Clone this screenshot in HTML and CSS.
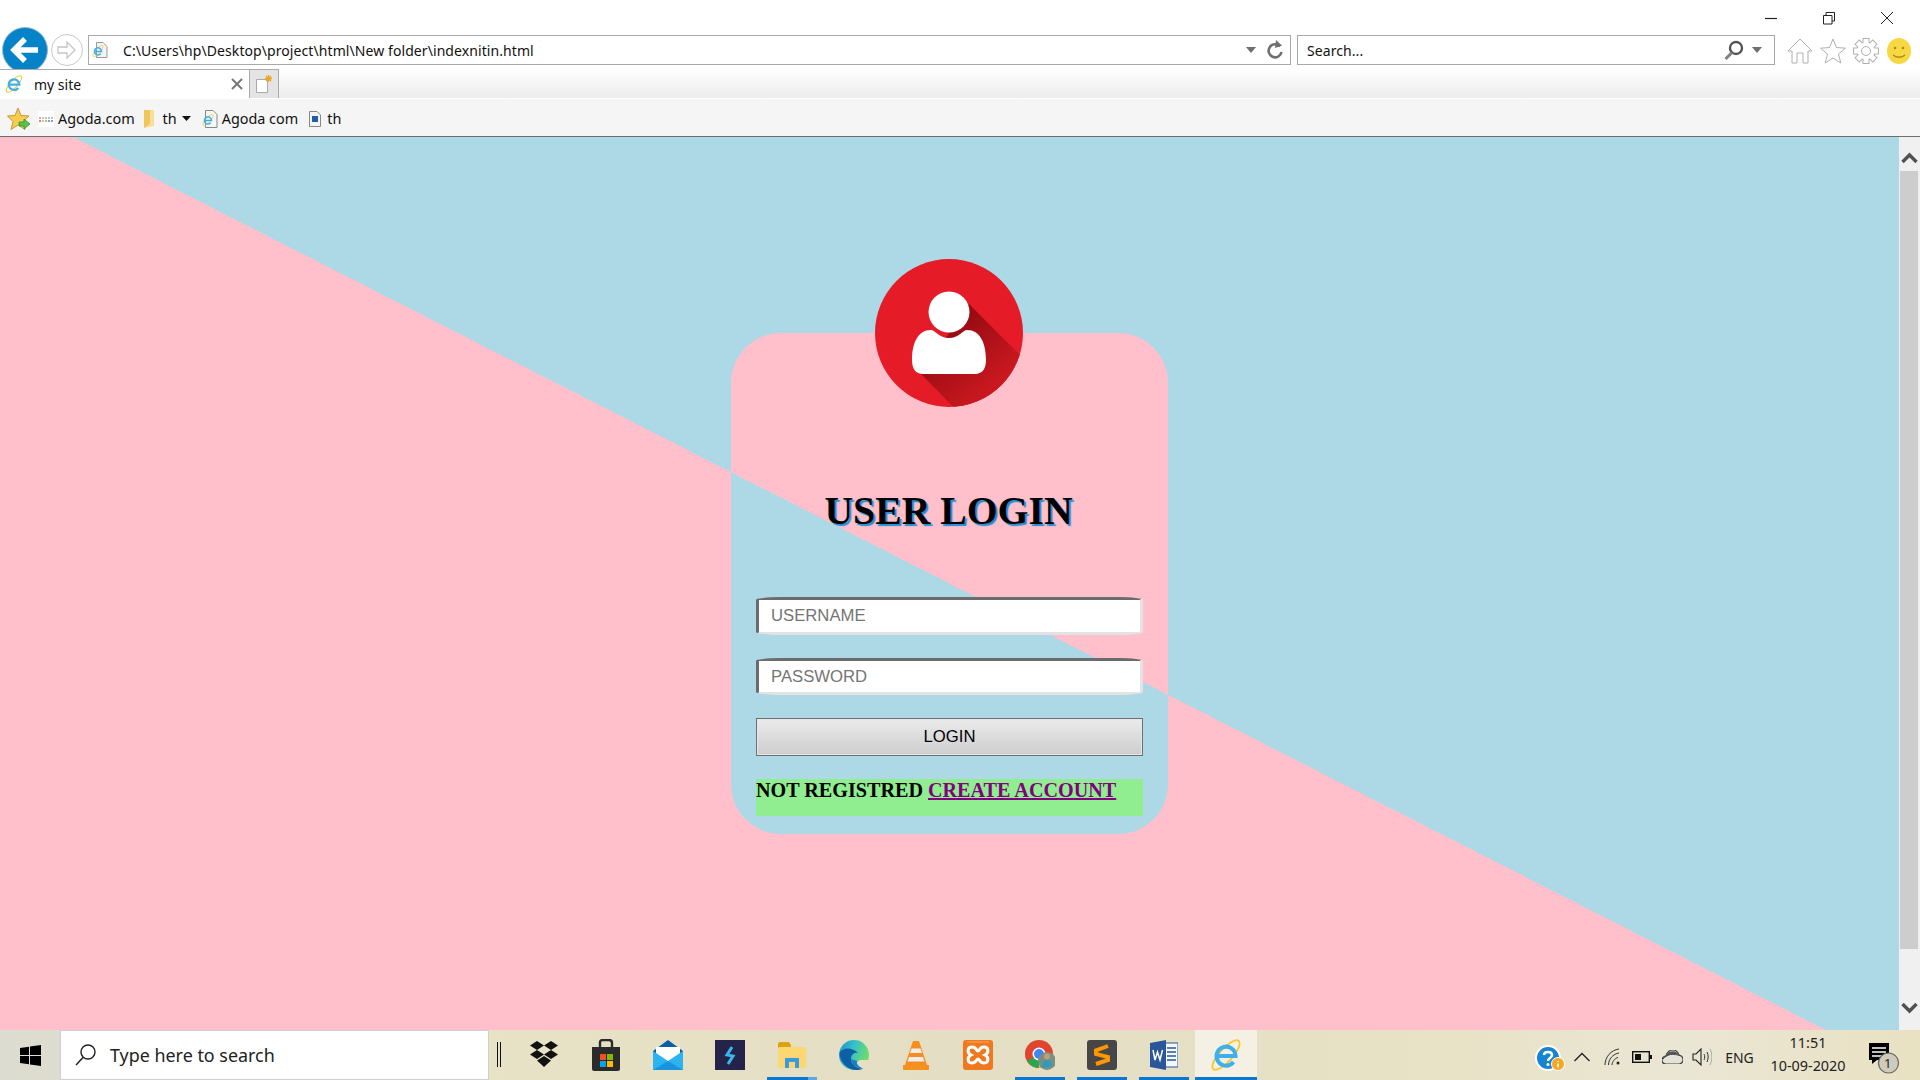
FILE: index.html
```html
<!DOCTYPE html>
<html lang="en">
<head>
    <meta charset="UTF-8">
    <meta name="viewport" content="width=device-width, initial-scale=1.0">
    <title>my site</title>
    <link rel="stylesheet" href="styles.css">
</head>
<body>

    <svg class="defs" width="0" height="0">
        <defs>
            <symbol id="ie" viewBox="0 0 32 32">
                <ellipse cx="16" cy="16" rx="19" ry="6.500" transform="rotate(-48 16 16)" fill="none" stroke="#f5c92a" stroke-width="1.800"/>
                <path d="M7 17H25.500A9.500 9.500 0 1 0 23.500 23" fill="none" stroke="#3fb0ec" stroke-width="4"/>
            </symbol>
            <g id="gear-shape">
                <circle cx="13" cy="13" r="8.500"/>
                <rect x="10.500" y="1" width="5" height="5"/>
                <rect x="10.500" y="1" width="5" height="5" transform="rotate(45 13 13)"/>
                <rect x="10.500" y="1" width="5" height="5" transform="rotate(90 13 13)"/>
                <rect x="10.500" y="1" width="5" height="5" transform="rotate(135 13 13)"/>
                <rect x="10.500" y="1" width="5" height="5" transform="rotate(180 13 13)"/>
                <rect x="10.500" y="1" width="5" height="5" transform="rotate(225 13 13)"/>
                <rect x="10.500" y="1" width="5" height="5" transform="rotate(270 13 13)"/>
                <rect x="10.500" y="1" width="5" height="5" transform="rotate(315 13 13)"/>
            </g>
        </defs>
    </svg>

    <!-- window controls -->
    <div class="titlebar">
        <svg class="winbtn" width="14" height="14" viewBox="0 0 14 14"><path d="M1 7.500H13" stroke="#222" stroke-width="1.200"/></svg>
        <svg class="winbtn" width="14" height="14" viewBox="0 0 14 14"><path d="M1.500 4.500H10V13H1.500ZM4 4.500V1.500H12.500V10H10" fill="none" stroke="#222"/></svg>
        <svg class="winbtn" width="14" height="14" viewBox="0 0 14 14"><path d="M1 1L13 13M13 1L1 13" stroke="#222"/></svg>
    </div>

    <!-- address row -->
    <div class="toolbar">
        <svg class="nav-back" width="46" height="46" viewBox="0 0 46 46">
            <circle cx="23" cy="23" r="22.500" fill="#0483c8" stroke="#9cb6c6"/>
            <path d="M36 23H13M23 12L12 23L23 34" fill="none" stroke="#fff" stroke-width="5.500"/>
        </svg>
        <svg class="nav-forward" width="32" height="32" viewBox="0 0 32 32">
            <circle cx="16" cy="16" r="15.500" fill="#fff" stroke="#c9c9c9"/>
            <path d="M7 13H16V8L24 16L16 24V19H7Z" fill="none" stroke="#c4c4c4" stroke-width="1.300"/>
        </svg>
        <div class="address">
            <svg class="addr-icon" width="16" height="16" viewBox="0 0 16 16">
                <path d="M4.500 .500H11L15 4.500V15.500H4.500Z" fill="#f4f4f4" stroke="#999"/>
                <use href="#ie" x="0" y="3" width="12" height="12"/>
            </svg>
            <span class="addr-text">C:\Users\hp\Desktop\project\html\New folder\indexnitin.html</span>
            <svg class="caret" width="10" height="6" viewBox="0 0 10 6"><path d="M0 0H10L5 6Z" fill="#6e6e6e"/></svg>
            <svg class="refresh" width="18" height="20" viewBox="0 0 18 20">
                <path d="M14 6.500A6.500 6.500 0 1 0 15.500 12" fill="none" stroke="#6f6f6f" stroke-width="2.600"/>
                <path d="M10 0L16 5.500L9 8Z" fill="#6f6f6f"/>
            </svg>
        </div>
        <div class="searchbox">
            <span class="addr-text">Search...</span>
            <svg class="magnify" width="20" height="20" viewBox="0 0 20 20">
                <circle cx="12" cy="8" r="6" fill="none" stroke="#555" stroke-width="2.400"/>
                <path d="M8 12.500L1.500 19" stroke="#808080" stroke-width="3"/>
            </svg>
            <svg class="caret" width="10" height="6" viewBox="0 0 10 6"><path d="M0 0H10L5 6Z" fill="#6e6e6e"/></svg>
        </div>
        <div class="tools">
            <svg width="26" height="26" viewBox="0 0 26 26"><path d="M13 1L1 13H5V25H10V15H16V25H21V13H25Z" fill="#fff" stroke="#b0b0b0"/></svg>
            <svg width="26" height="26" viewBox="0 0 26 26"><path d="M13 1L16.500 9.500L25.500 10.200L18.500 16L20.800 25L13 20L5.200 25L7.500 16L.500 10.200L9.500 9.500Z" fill="#fff" stroke="#b0b0b0"/></svg>
            <svg width="26" height="26" viewBox="0 0 26 26">
                <use href="#gear-shape" fill="#fff" stroke="#b0b0b0" stroke-width="2"/>
                <use href="#gear-shape" fill="#fff" stroke="none"/>
                <circle cx="13" cy="13" r="4.500" fill="none" stroke="#b0b0b0"/>
            </svg>
            <svg width="26" height="26" viewBox="0 0 26 26">
                <ellipse cx="13" cy="13" rx="12" ry="13" fill="#f7d842"/>
                <circle cx="9" cy="10" r="1.300" fill="#a58a20"/>
                <circle cx="17" cy="10" r="1.300" fill="#a58a20"/>
                <path d="M7 17C10 20 16 20 19 17" fill="none" stroke="#a58a20" stroke-width="1.300"/>
            </svg>
        </div>
    </div>

    <!-- tabs -->
    <div class="tabrow">
        <div class="tab">
            <svg width="18" height="18"><use href="#ie"/></svg>
            <span class="tab-title">my site</span>
            <svg class="tab-close" width="12" height="12" viewBox="0 0 12 12"><path d="M1 1L11 11M11 1L1 11" stroke="#777" stroke-width="2"/></svg>
        </div>
        <div class="newtab">
            <svg width="18" height="18" viewBox="0 0 18 18">
                <path d="M1.500 4.500H12.500V17.500H1.500Z" fill="#fff" stroke="#aaa"/>
                <path d="M13.500 0V7M10 3.500H17M11 1L16 6M16 1L11 6" stroke="#f0a41c" stroke-width="1.300"/>
            </svg>
        </div>
    </div>

    <!-- favorites -->
    <div class="favbar">
        <svg class="fav-star" width="24" height="24" viewBox="0 0 24 24">
            <path d="M11 1L14 8.500L22 9L16 14.500L18 22.500L11 18L4 22.500L6 14.500L.500 9L8 8.500Z" fill="#f8cc4c" stroke="#c8963a"/>
            <path d="M12 15H17V12L23 17L17 22V19H12Z" fill="#54c548" stroke="#2f8a2c" stroke-width=".700"/>
        </svg>
        <svg class="fav-icon" width="16" height="16" viewBox="0 0 16 16">
            <rect width="16" height="16" fill="#fff"/>
            <path d="M1 7H3" stroke="#999" stroke-width="1.500"/><path d="M4 7H6" stroke="#bbb" stroke-width="1.500"/>
            <path d="M7 7H9M10 7H12M13 7H15" stroke="#aaa" stroke-width="1.500"/>
            <path d="M1 10H3" stroke="#e2504c" stroke-width="1.500"/><path d="M4 10H6" stroke="#f0a93c" stroke-width="1.500"/>
            <path d="M7 10H9" stroke="#7bbf4a" stroke-width="1.500"/><path d="M10 10H12" stroke="#4a8fd8" stroke-width="1.500"/>
            <path d="M13 10H15" stroke="#9a5ac8" stroke-width="1.500"/>
        </svg>
        <span class="fav-link">Agoda.com</span>
        <svg class="fav-folder" width="11" height="18" viewBox="0 0 11 18"><path d="M0 0H10V16L0 18Z" fill="#f7df9a"/><path d="M0 0H6V14L0 18Z" fill="#efc65c"/></svg>
        <span class="fav-link">th</span>
        <svg class="fav-caret" width="9" height="5" viewBox="0 0 9 5"><path d="M0 0H9L4.500 5Z" fill="#111"/></svg>
        <svg class="fav-page" width="16" height="18" viewBox="0 0 16 18">
            <path d="M3.500 .500H11L15 4.500V17.500H3.500Z" fill="#f6f6f6" stroke="#888"/>
            <use href="#ie" x="0" y="4" width="12" height="12"/>
        </svg>
        <span class="fav-link">Agoda com</span>
        <svg class="fav-doc" width="12" height="16" viewBox="0 0 12 16">
            <path d="M.500 .500H8L11.500 4V15.500H.500Z" fill="#f4f4f4" stroke="#888"/>
            <rect x="3" y="5" width="6" height="6" fill="#1f5fa8"/>
        </svg>
        <span class="fav-link">th</span>
    </div>

    <div class="viewport">
        <main class="page">
            <form class="login-card">
                <svg class="avatar" width="148" height="148" viewBox="0 0 148 148">
                    <defs>
                        <clipPath id="avatar-clip"><circle cx="74" cy="74" r="74"/></clipPath>
                        <linearGradient id="avatar-shade" gradientUnits="userSpaceOnUse" x1="70" y1="70" x2="120" y2="125">
                            <stop offset="0" stop-color="#950a12"/>
                            <stop offset="1" stop-color="#c9181f"/>
                        </linearGradient>
                    </defs>
                    <circle cx="74" cy="74" r="74" fill="#e51c28"/>
                    <path clip-path="url(#avatar-clip)" d="M94 45L150 101V160H90L46 115Z" fill="url(#avatar-shade)"/>
                    <circle cx="74" cy="53" r="20.500" fill="#fff"/>
                    <path d="M37 101C37 84 43 71 56 71C60 71 64 79 74 79C84 79 88 71 92 71C105 71 111 84 111 101C111 110 107 115 100 115H48C41 115 37 110 37 101Z" fill="#fff"/>
                </svg>
                <h1 class="login-title">USER LOGIN</h1>
                <input class="field" type="text" placeholder="USERNAME">
                <input class="field field-pass" type="password" placeholder="PASSWORD">
                <button class="login-btn" type="button">LOGIN</button>
                <p class="register">NOT REGISTRED <a href="#">CREATE ACCOUNT</a></p>
            </form>
        </main>
        <div class="scrollbar">
            <svg width="17" height="12" viewBox="0 0 17 12"><path d="M1.500 10L8.500 3L15.500 10" fill="none" stroke="#505050" stroke-width="3.400"/></svg>
            <div class="scroll-track"><div class="scroll-thumb"></div></div>
            <svg width="17" height="12" viewBox="0 0 17 12"><path d="M1.500 2L8.500 9L15.500 2" fill="none" stroke="#505050" stroke-width="3.400"/></svg>
        </div>
    </div>

    <!-- windows taskbar -->
    <div class="taskbar">
        <div class="start">
            <svg width="21" height="21" viewBox="0 0 21 21"><path d="M0 3L9 1.700V10H0ZM10 1.500L21 0V10H10ZM0 11H9V19.300L0 18ZM10 11H21V21L10 19.500Z" fill="#000"/></svg>
        </div>
        <div class="task-search">
            <svg width="21" height="22" viewBox="0 0 21 22">
                <circle cx="13" cy="8" r="7" fill="none" stroke="#222" stroke-width="1.400"/>
                <path d="M8 13.500L1 21" stroke="#222" stroke-width="1.500"/>
            </svg>
            <span>Type here to search</span>
        </div>
        <div class="task-divider"></div>

        <div class="slot">
            <svg width="30" height="27" viewBox="0 0 30 27"><path d="M8 0L15 4.500L8 9L1 4.500ZM22 0L29 4.500L22 9L15 4.500ZM8 9L15 13.500L8 18L1 13.500ZM22 9L29 13.500L22 18L15 13.500ZM15 15L22 19.500L15 26L8 19.500Z" fill="#111"/></svg>
        </div>
        <div class="slot">
            <svg width="30" height="32" viewBox="0 0 30 32">
                <path d="M9 8V4C9 2 10 1 12 1H18C20 1 21 2 21 4V8" fill="none" stroke="#2b2b2b" stroke-width="2.400"/>
                <path d="M1 8H29V30C29 31 28 32 27 32H3C2 32 1 31 1 30Z" fill="#2b2b2b"/>
                <rect x="9" y="15" width="6" height="6" fill="#f25022"/>
                <rect x="16" y="15" width="6" height="6" fill="#7fba00"/>
                <rect x="9" y="22" width="6" height="6" fill="#00a4ef"/>
                <rect x="16" y="22" width="6" height="6" fill="#ffb900"/>
            </svg>
        </div>
        <div class="slot">
            <svg width="30" height="30" viewBox="0 0 30 30">
                <path d="M0 11L15 0L30 11V30H0Z" fill="#0a5fa8"/>
                <path d="M3 7H27V15L15 22L3 15Z" fill="#fff"/>
                <path d="M0 11L15 21L30 11V30H0Z" fill="#2bb4ef"/>
                <path d="M0 30L15 21L30 30Z" fill="#1a94dc"/>
            </svg>
        </div>
        <div class="slot">
            <svg width="30" height="30" viewBox="0 0 30 30">
                <rect width="30" height="30" fill="#24244a"/>
                <path d="M17 7L12 15L18 16L13 24" fill="none" stroke="#3db5e8" stroke-width="3"/>
            </svg>
        </div>
        <div class="slot slot-folder">
            <svg width="28" height="26" viewBox="0 0 28 26">
                <path d="M0 2C0 1 1 0 2 0H11L13 3V6H0Z" fill="#dca30f"/>
                <rect y="5" width="28" height="21" rx="2" fill="#fcd872"/>
                <path d="M7 26V16H21V26H17V20H11V26Z" fill="#3b9ae0"/>
            </svg>
        </div>
        <div class="slot">
            <svg width="30" height="30" viewBox="0 0 30 30">
                <defs><linearGradient id="edge-g" x1="0" y1="0" x2="1" y2=".4"><stop offset="0" stop-color="#1f8fd0"/><stop offset=".5" stop-color="#35c1c8"/><stop offset="1" stop-color="#6fdc6a"/></linearGradient></defs>
                <circle cx="15" cy="15" r="15" fill="url(#edge-g)"/>
                <path d="M21 20H30.200C29.500 25 26 28.500 21 30C16 29 16 22 21 20Z" fill="#e5dfc4"/>
                <path d="M.500 13C1 23 9 30 17 30C20 30 22 29.500 24 28.500C17 29 12 24 12 19C12 15 15 12 19 13C14 7 3 7 .500 13Z" fill="#0f5fa6"/>
                <path d="M12 19C12 24 17 29 24 28.500C20 27 17 24 18 21C15 20 13 19 12 19Z" fill="#1a7fca"/>
            </svg>
        </div>
        <div class="slot">
            <svg width="26" height="30" viewBox="0 0 26 30">
                <path d="M10 1H16L24 25H2Z" fill="#f78d1e"/>
                <path d="M8.500 8.500H17.500L19 13H7ZM6 17H20L21.500 21.500H4.500Z" fill="#eeeeee"/>
                <path d="M0 25H26V29C26 29.500 25.500 30 25 30H1C.500 30 0 29.500 0 29Z" fill="#f5911e"/>
            </svg>
        </div>
        <div class="slot">
            <svg width="30" height="30" viewBox="0 0 30 30">
                <rect width="30" height="30" rx="3" fill="#f0781e"/>
                <path d="M4 2H26" stroke="#f9a868" stroke-width="1"/>
                <path d="M9 7C14 7 13 11 15 11C17 11 16 7 21 7C26 7 26 13 22 15C26 17 26 23 21 23C16 23 17 19 15 19C13 19 14 23 9 23C4 23 4 17 8 15C4 13 4 7 9 7Z" fill="none" stroke="#fff" stroke-width="3"/>
            </svg>
        </div>
        <div class="slot slot-open">
            <svg width="30" height="30" viewBox="0 0 30 30">
                <circle cx="14" cy="14" r="14" fill="#e0452f"/>
                <path d="M14 14L2 21A14 14 0 0 0 14 28Z" fill="#2da44e"/>
                <path d="M14 14H28A14 14 0 0 1 14 28Z" fill="#f7c325"/>
                <circle cx="14" cy="14" r="6.500" fill="#fff"/>
                <circle cx="14" cy="14" r="5" fill="#4285f4"/>
                <circle cx="22" cy="21" r="9" fill="#77907f"/>
                <circle cx="22" cy="16.500" r="3" fill="#c79a7a"/>
                <path d="M17 28C17 22 20 20 22 20C25 20 27 22 27 26Z" fill="#2d9bc0"/>
            </svg>
        </div>
        <div class="slot slot-open">
            <svg width="30" height="30" viewBox="0 0 30 30">
                <rect width="30" height="30" rx="3" fill="#464646"/>
                <path d="M21 6L9 10.500V14L21 17V20L9 24" fill="none" stroke="#ff9800" stroke-width="4"/>
            </svg>
        </div>
        <div class="slot slot-open">
            <svg width="28" height="30" viewBox="0 0 28 30">
                <rect x="10" y="3" width="18" height="24" fill="#f3f6fb" stroke="#2b579a"/>
                <path d="M17 8H26M17 12H26M17 16H26M17 20H26" stroke="#2b579a" stroke-width="1.500"/>
                <path d="M0 3L16 0V30L0 27Z" fill="#2b579a"/>
                <path d="M3 10L5 20L7.500 12L10 20L12.500 10" fill="none" stroke="#fff" stroke-width="1.500"/>
            </svg>
        </div>
        <div class="slot slot-active">
            <svg width="32" height="32"><use href="#ie"/></svg>
        </div>

        <div class="tray">
            <div class="tray-help">
                <svg width="30" height="26" viewBox="0 0 30 26">
                    <circle cx="13" cy="13" r="12" fill="#1684d0" stroke="#fff" stroke-width="2"/>
                    <path d="M9 10C9 6 17 6 17 10C17 13 13 13 13 16" fill="none" stroke="#fff" stroke-width="2.500"/>
                    <circle cx="13" cy="19.500" r="1.500" fill="#fff"/>
                    <circle cx="23" cy="19" r="6.500" fill="#f5a623" stroke="#fff"/>
                    <path d="M23 16V17M23 18.500V22.500" stroke="#fff" stroke-width="1.500"/>
                </svg>
            </div>
            <div class="tray-item"><svg width="16" height="10" viewBox="0 0 16 10"><path d="M.500 9L8 1.500L15.500 9" fill="none" stroke="#222" stroke-width="1.300"/></svg></div>
            <div class="tray-item">
                <svg width="17" height="18" viewBox="0 0 17 18">
                    <path d="M1 17C1 9 7 2 15 1M4.500 17C4.500 11 9 6 15 5M8 17C8 14 11 10 14 9.500" fill="none" stroke="#333" stroke-width="1"/>
                    <circle cx="14" cy="15" r="1.500" fill="#222"/>
                </svg>
            </div>
            <div class="tray-item">
                <svg width="20" height="12" viewBox="0 0 20 12">
                    <rect x=".700" y=".700" width="16.600" height="10.600" fill="none" stroke="#111" stroke-width="1.400"/>
                    <rect x="3" y="3" width="6" height="6" fill="#111"/>
                    <rect x="18" y="4" width="2" height="4" fill="#111"/>
                </svg>
            </div>
            <div class="tray-item">
                <svg width="21" height="14" viewBox="0 0 21 14">
                    <path d="M4 14C1 14 0 12 0 10C0 8 2 6 4 6C5 2 8 0 11 0C14 0 16 2 17 5C19 5 21 7 21 10C21 12 19 14 17 14Z" fill="#e4e1d6" stroke="#444" stroke-width="1.200"/>
                    <path d="M1 9C5 4 11 3 19 6" fill="none" stroke="#444" stroke-width="1"/>
                    <path d="M4 5C6 1 14 -1 17 5C12 3 8 4 2 8Z" fill="#555"/>
                </svg>
            </div>
            <div class="tray-item">
                <svg width="20" height="18" viewBox="0 0 20 18">
                    <path d="M1 6H4L9 1V17L4 12H1Z" fill="none" stroke="#222" stroke-width="1.100"/>
                    <path d="M12 6C13 8 13 10 12 12M15 4C16.500 7 16.500 11 15 14" fill="none" stroke="#333"/>
                    <path d="M18 1C20.500 6 20.500 12 18 17" fill="none" stroke="#aaa"/>
                </svg>
            </div>
            <div class="tray-lang">ENG</div>
            <div class="tray-clock">
                <span>11:51</span>
                <span>10-09-2020</span>
            </div>
            <div class="tray-notify">
                <svg width="32" height="32" viewBox="0 0 32 32">
                    <path d="M0 1H20V18H8L3 22V18H0Z" fill="#000"/>
                    <path d="M3 6H17M3 10H17M3 14H13" stroke="#fff" stroke-width="1.300"/>
                    <circle cx="19.500" cy="21" r="10" fill="#cfcbbb" stroke="#666" stroke-width="1.200"/>
                </svg>
                <span class="notify-count">1</span>
            </div>
        </div>
    </div>

</body>
</html>
```

FILE: styles.css
```css
* {
    box-sizing: border-box;
}
html, body {
    height: 100%;
}
body {
    margin: 0;
    display: flex;
    flex-direction: column;
    overflow: hidden;
    font-family: "Noto Sans", "Open Sans", sans-serif;
    font-size: 14px;
    color: #111;
    background-color: #fff;
}
svg {
    display: block;
    flex: none;
}
.defs {
    position: absolute;
}

/* browser chrome */
.titlebar {
    height: 35px;
    display: flex;
    justify-content: flex-end;
    align-items: center;
    gap: 44px;
    padding: 0 26px 0 0;
}
.toolbar {
    height: 34px;
    display: flex;
    align-items: flex-start;
}
.nav-back {
    margin: -8px 3px -4px 2px;
}
.nav-forward {
    margin: -1px 5px 0 0;
}
.address, .searchbox {
    height: 30px;
    display: flex;
    align-items: center;
    border: 1px solid #a9a9a9;
    background-color: #fff;
}
.address {
    width: 1203px;
    padding: 0 6px 0 3px;
}
.addr-icon {
    margin-right: 15px;
}
.addr-text {
    flex: 1;
    font-size: 14px;
    letter-spacing: .08px;
}
.refresh {
    margin-left: 10px;
}
.searchbox {
    width: 478px;
    margin-left: 6px;
    padding: 0 12px 0 9px;
}
.magnify {
    margin-right: 8px;
}
.tools {
    display: flex;
    gap: 7px;
    margin: 3px 0 0 12px;
}
.tabrow {
    height: 29px;
    display: flex;
    background: linear-gradient(#fff, #ececec);
}
.tab {
    position: relative;
    width: 250px;
    display: flex;
    align-items: center;
    padding: 0 6px 0 5px;
    border: 1px solid #ababab;
    border-width: 1px 1px 0 0;
    background-color: #fff;
}
.tab-title {
    flex: 1;
    margin-left: 11px;
    font-size: 14px;
}
.newtab {
    width: 29px;
    display: flex;
    align-items: center;
    justify-content: center;
    border: 1px solid #ababab;
    border-width: 1px 1px 0 0;
    background-color: #e4e4e4;
}
.favbar {
    height: 39px;
    display: flex;
    align-items: center;
    padding: 2px 0 0 7px;
    border-top: 1px solid #fff;
    border-bottom: 1px solid #6e6e6e;
    background-color: #f5f5f5;
}
.fav-link {
    font-size: 14.400px;
}
.fav-star {
    margin-right: 7px;
}
.fav-icon {
    margin-right: 4px;
}
.fav-folder {
    margin: 0 8px 0 9px;
}
.fav-caret {
    margin: 0 11px 0 5px;
}
.fav-page {
    margin-right: 4px;
}
.fav-doc {
    margin: 0 6px 0 11px;
}

/* page content */
.viewport {
    flex: 1;
    min-height: 0;
    display: flex;
}
.page {
    flex: 1;
    display: flex;
    align-items: center;
    justify-content: center;
    background: linear-gradient(27deg, #ffc0cb 50%, #add8e6 50%);
}
.login-card {
    position: relative;
    width: 437px;
    height: 501px;
    padding: 155px 25px 0;
    display: flex;
    flex-direction: column;
    border-radius: 50px;
    background: linear-gradient(27deg, #add8e6 50%, #ffc0cb 50%);
}
.avatar {
    position: absolute;
    top: -74px;
    left: 144px;
}
.login-title {
    margin: 0 0 63px;
    padding-right: 2px;
    font-family: "Liberation Serif", serif;
    font-size: 39.700px;
    line-height: 46px;
    font-weight: bold;
    text-align: center;
    color: #000;
    text-shadow: 2px 2px 1px #1c8fd6;
}
.field {
    width: 387px;
    height: 38px;
    margin-bottom: 23px;
    padding: 0 12px;
    border-style: solid;
    border-width: 3px;
    border-color: #6b6b6b #e3e3e3 #e3e3e3 #6b6b6b;
    border-radius: 24px / 3px;
    background-color: #fff;
    font-family: "Liberation Sans", Arial, sans-serif;
    font-size: 16.700px;
    color: #222;
    outline: none;
}
.field::placeholder {
    color: #757575;
    opacity: 1;
}
.field-pass {
    height: 37px;
}
.login-btn {
    width: 387px;
    height: 38px;
    margin-bottom: 23px;
    padding: 0;
    border: 1px solid #707070;
    box-shadow: inset 0 0 0 1px #e6e6e6;
    background: linear-gradient(#ebebeb, #cdcdcd);
    font-family: "Liberation Sans", Arial, sans-serif;
    font-size: 16.700px;
    color: #000;
}
.register {
    width: 387px;
    height: 37px;
    margin: 0;
    font-family: "Liberation Serif", serif;
    font-size: 20.150px;
    line-height: 23px;
    font-weight: bold;
    color: #000;
    background-color: #90ee90;
}
.register a {
    color: #800080;
    text-decoration-thickness: 2px;
}

/* scrollbar */
.scrollbar {
    width: 21px;
    display: flex;
    flex-direction: column;
    align-items: center;
    padding: 15px 0 16px;
    background-color: #f0f0f0;
}
.scroll-track {
    flex: 1;
    width: 100%;
    padding: 7px 1px 0;
}
.scroll-thumb {
    width: 18px;
    height: 778px;
    background-color: #cdcdcd;
}

/* taskbar */
.taskbar {
    height: 50px;
    display: flex;
    background: linear-gradient(90deg, #dcdcd0 0, #e8e2c6 25%, #e3dec4 50%, #e8e2c6 75%, #eae6d4 88%, #e9e1c2 100%);
}
.start {
    width: 60px;
    display: flex;
    align-items: center;
    justify-content: center;
}
.task-search {
    width: 429px;
    display: flex;
    align-items: center;
    gap: 14px;
    padding: 0 0 0 14px;
    border: 1px solid #cfcfcf;
    background-color: #fff;
    font-size: 17.900px;
    color: #222;
}
.task-divider {
    width: 4px;
    height: 25px;
    margin: 12px 12px 0 8px;
    border: 1px solid #111;
    border-width: 0 1px;
}
.slot {
    width: 62px;
    display: flex;
    align-items: center;
    justify-content: center;
    padding-bottom: 1px;
}
.slot-open {
    background: linear-gradient(#0a78d0, #0a78d0) center bottom / 50px 3px no-repeat;
}
.slot-folder {
    background: linear-gradient(90deg, #0a78d0 41px, #5fa6e0 41px) center bottom / 50px 3px no-repeat;
}
.slot-active {
    background: linear-gradient(#0a78d0, #0a78d0) center bottom / 100% 3px no-repeat, #f4f1e4;
}
.tray {
    margin-left: auto;
    display: flex;
}
.tray-help {
    width: 34px;
    display: flex;
    align-items: center;
    justify-content: center;
    padding-top: 6px;
}
.tray-item {
    width: 30px;
    display: flex;
    align-items: center;
    justify-content: center;
    padding-top: 4px;
}
.tray-lang {
    width: 45px;
    display: flex;
    align-items: center;
    justify-content: center;
    padding-top: 4px;
    font-size: 14px;
    color: #222;
}
.tray-clock {
    width: 92px;
    display: flex;
    flex-direction: column;
    align-items: center;
    justify-content: center;
    gap: 5px;
    padding-bottom: 2px;
    font-size: 14.400px;
    line-height: 18px;
    color: #222;
}
.tray-notify {
    position: relative;
    width: 66px;
    padding: 12px 0 0 15px;
}
.notify-count {
    position: absolute;
    top: 24px;
    left: 30px;
    font-size: 13px;
    line-height: 18px;
    color: #222;
}
```
